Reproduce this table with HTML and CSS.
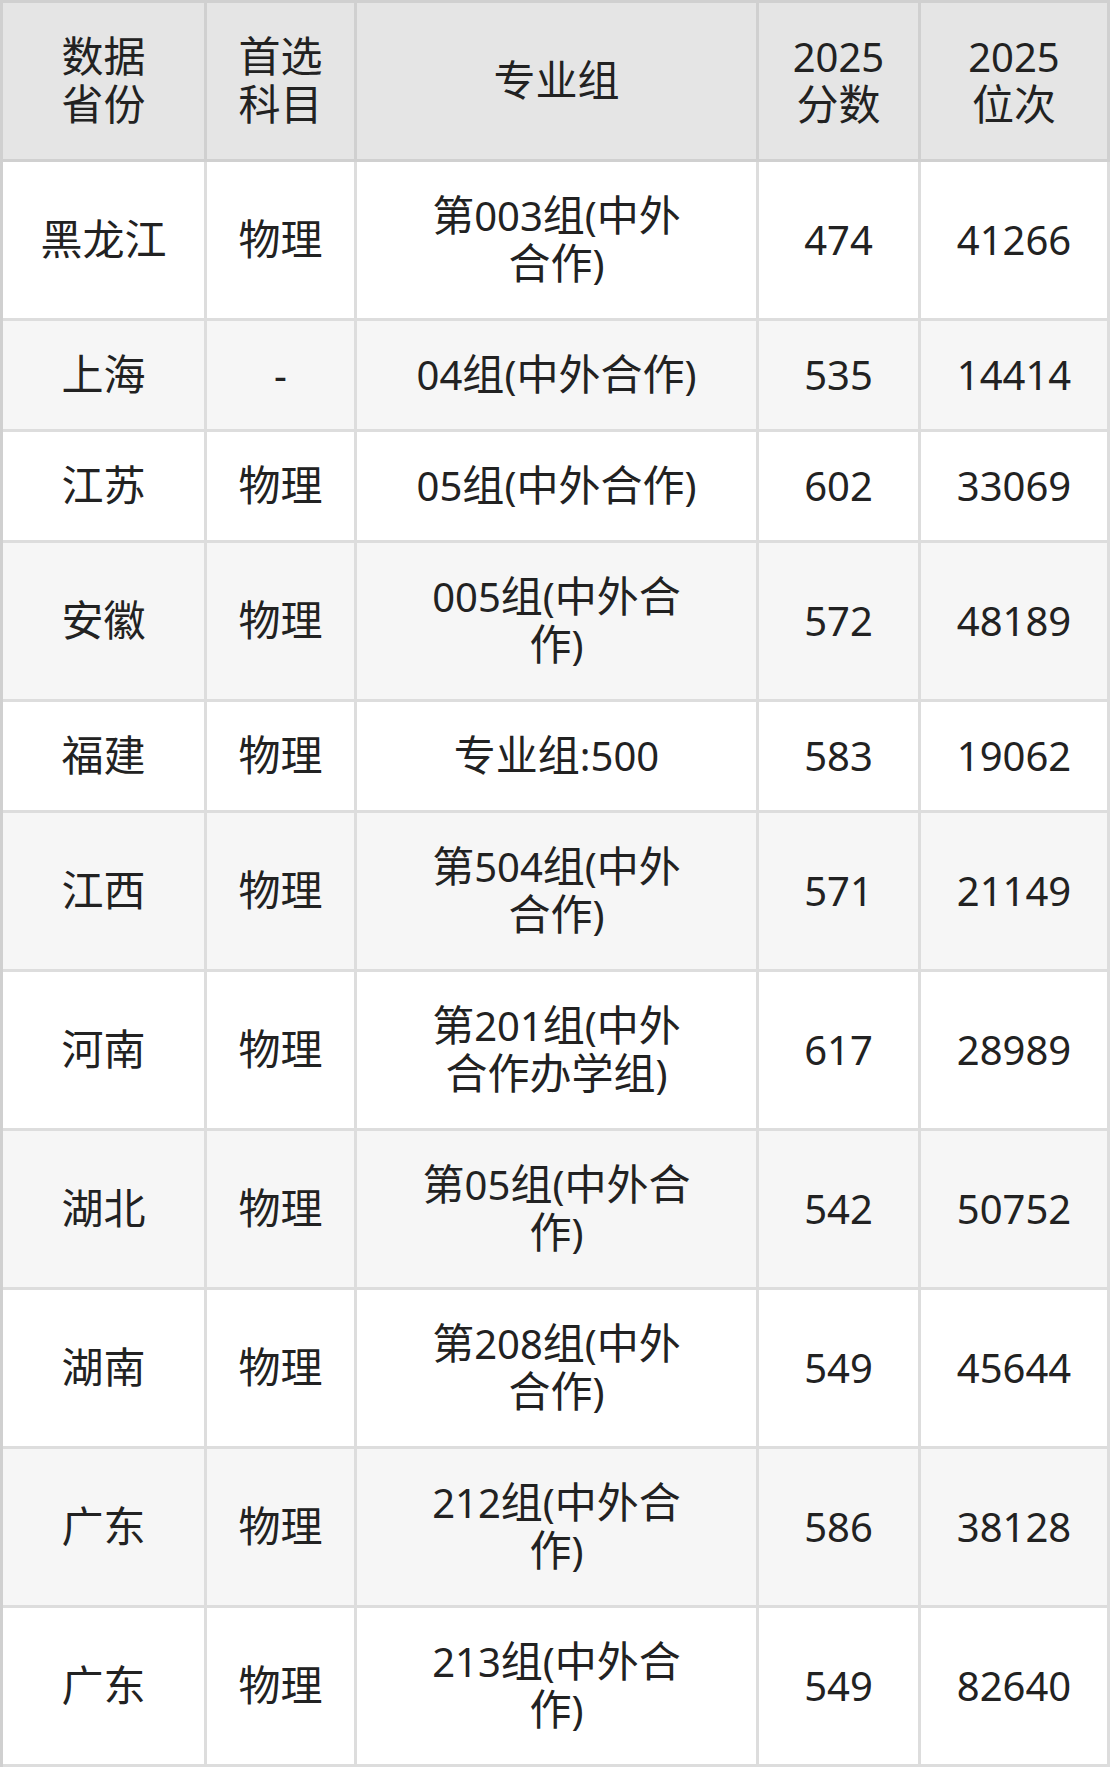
FILE: index.html
```html
<!DOCTYPE html>
<html lang="zh">
<head>
<meta charset="utf-8">
<title>分数线</title>
<link rel="stylesheet" href="styles.css">
</head>
<body>
<table class="score-table">
  <colgroup>
    <col class="c1"><col class="c2"><col class="c3"><col class="c4"><col class="c5">
  </colgroup>
  <thead>
    <tr>
      <th><span class="h">数据</span><br><span class="h">省份</span></th>
      <th><span class="h">首选</span><br><span class="h">科目</span></th>
      <th class="group"><span class="h">专业组</span></th>
      <th>2025<br><span class="h">分数</span></th>
      <th>2025<br><span class="h">位次</span></th>
    </tr>
  </thead>
  <tbody>
    <tr><td><span class="h">黑龙江</span></td><td><span class="h">物理</span></td><td class="group"><span class="h">第</span>003<span class="h">组</span>(<span class="h">中外合作</span>)</td><td>474</td><td>41266</td></tr>
    <tr><td><span class="h">上海</span></td><td>-</td><td class="group">04<span class="h">组</span>(<span class="h">中外合作</span>)</td><td>535</td><td>14414</td></tr>
    <tr><td><span class="h">江苏</span></td><td><span class="h">物理</span></td><td class="group">05<span class="h">组</span>(<span class="h">中外合作</span>)</td><td>602</td><td>33069</td></tr>
    <tr><td><span class="h">安徽</span></td><td><span class="h">物理</span></td><td class="group">005<span class="h">组</span>(<span class="h">中外合作</span>)</td><td>572</td><td>48189</td></tr>
    <tr><td><span class="h">福建</span></td><td><span class="h">物理</span></td><td class="group"><span class="h">专业组</span>:500</td><td>583</td><td>19062</td></tr>
    <tr><td><span class="h">江西</span></td><td><span class="h">物理</span></td><td class="group"><span class="h">第</span>504<span class="h">组</span>(<span class="h">中外合作</span>)</td><td>571</td><td>21149</td></tr>
    <tr><td><span class="h">河南</span></td><td><span class="h">物理</span></td><td class="group"><span class="h">第</span>201<span class="h">组</span>(<span class="h">中外合作办学组</span>)</td><td>617</td><td>28989</td></tr>
    <tr><td><span class="h">湖北</span></td><td><span class="h">物理</span></td><td class="group"><span class="h">第</span>05<span class="h">组</span>(<span class="h">中外合作</span>)</td><td>542</td><td>50752</td></tr>
    <tr><td><span class="h">湖南</span></td><td><span class="h">物理</span></td><td class="group"><span class="h">第</span>208<span class="h">组</span>(<span class="h">中外合作</span>)</td><td>549</td><td>45644</td></tr>
    <tr><td><span class="h">广东</span></td><td><span class="h">物理</span></td><td class="group">212<span class="h">组</span>(<span class="h">中外合作</span>)</td><td>586</td><td>38128</td></tr>
    <tr><td><span class="h">广东</span></td><td><span class="h">物理</span></td><td class="group">213<span class="h">组</span>(<span class="h">中外合作</span>)</td><td>549</td><td>82640</td></tr>
  </tbody>
</table>
</body>
</html>
```
FILE: styles.css
```css
html, body {
  margin: 0;
  padding: 0;
  background: #ffffff;
}

.score-table {
  border-collapse: separate;
  border-spacing: 0;
  table-layout: fixed;
  width: 1110px;
  border-left: 3px solid #d0d0d0;
  border-top: 3px solid #d0d0d0;
  font-family: "Noto Sans", "Noto Sans CJK SC", sans-serif;
  font-size: 40px;
  line-height: 48px;
  color: #222222;
}

.c1 { width: 204px; }
.c2 { width: 150px; }
.c3 { width: 402px; }
.c4 { width: 162px; }
.c5 { width: 189px; }

.score-table th,
.score-table td {
  height: 48px;
  padding: 30px 18px;
  text-align: center;
  vertical-align: middle;
  font-weight: normal;
  border-right: 3px solid #dddddd;
  border-bottom: 3px solid #dddddd;
}

.score-table th {
  background: #e5e5e5;
  border-right-color: #d0d0d0;
  border-bottom-color: #d0d0d0;
}

.score-table th.group,
.score-table td.group {
  padding-left: 58px;
  padding-right: 58px;
}

.h {
  font-family: "Noto Sans CJK SC", sans-serif;
  font-size: 42px;
  line-height: 42px;
}

.score-table tbody tr:nth-child(even) td {
  background: #f6f6f6;
}

.score-table tbody tr:nth-child(odd) td {
  background: #ffffff;
}
```
